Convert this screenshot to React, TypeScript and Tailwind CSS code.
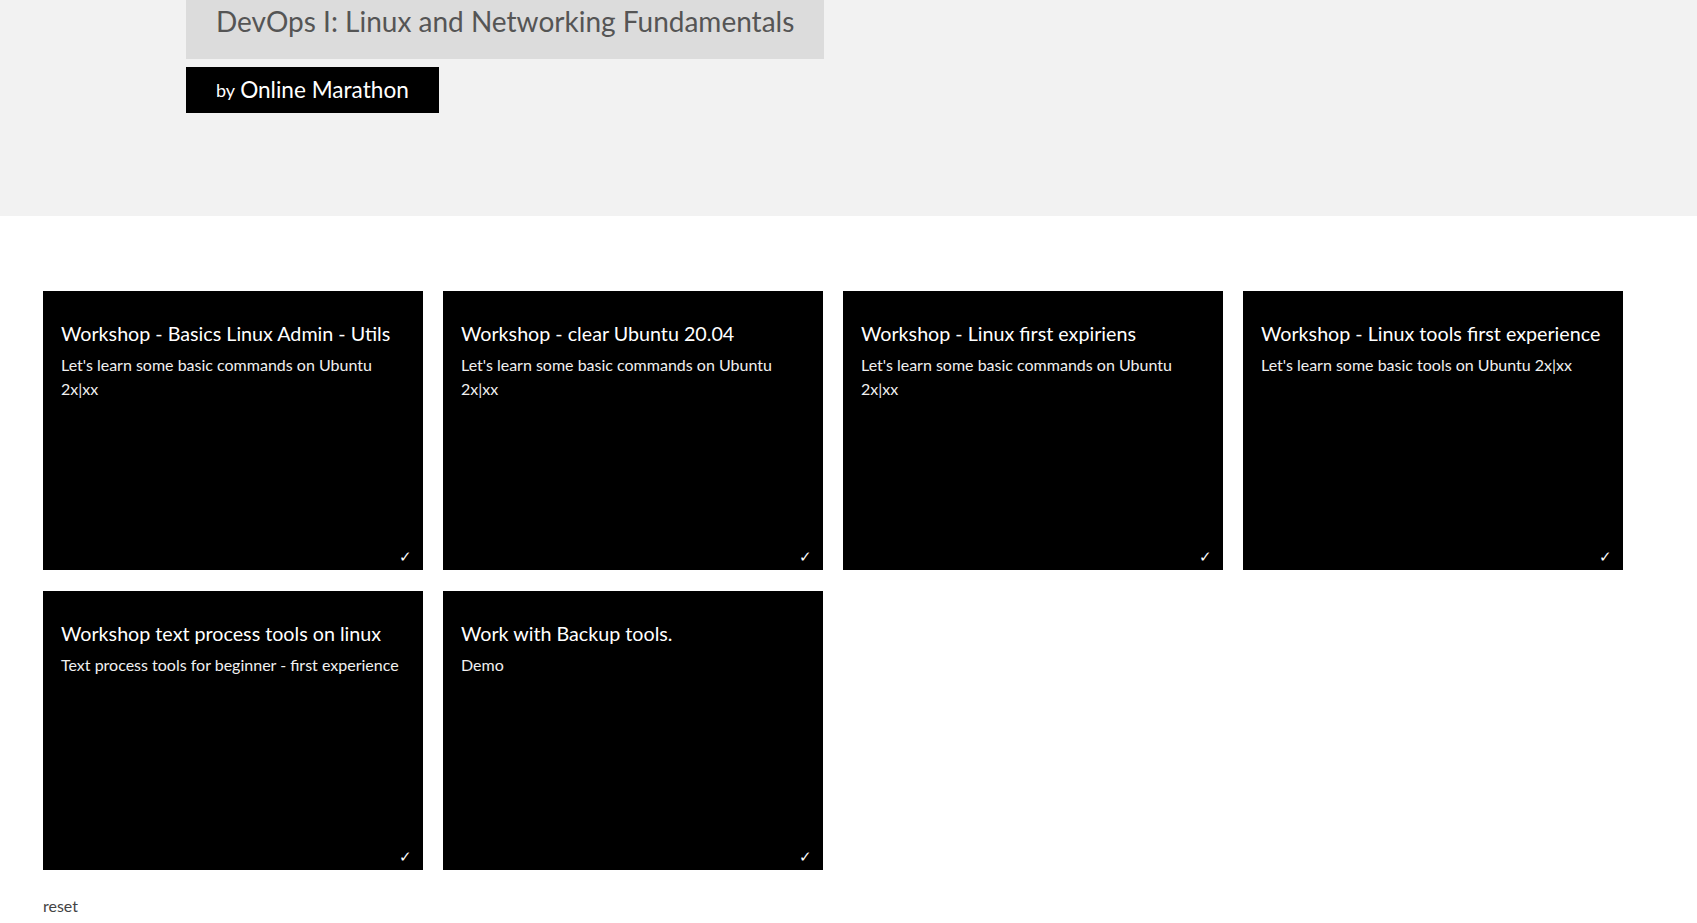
const cards = [
  { title: 'Workshop - Basics Linux Admin - Utils', text: "Let's learn some basic commands on Ubuntu 2x|xx" },
  { title: 'Workshop - clear Ubuntu 20.04', text: "Let's learn some basic commands on Ubuntu 2x|xx" },
  { title: 'Workshop - Linux first expiriens', text: "Let's learn some basic commands on Ubuntu 2x|xx" },
  { title: 'Workshop - Linux tools first experience', text: "Let's learn some basic tools on Ubuntu 2x|xx" },
  { title: 'Workshop text process tools on linux', text: 'Text process tools for beginner - first experience' },
  { title: 'Work with Backup tools.', text: 'Demo' },
];

function Card({ title, text }: { title: string; text: string }) {
  return (
    <div className="relative h-[279px] bg-black pl-[18px] pr-[8px] pt-[29px] text-white">
      <h3 className="whitespace-nowrap text-[19.7px] leading-[28px] font-normal">{title}</h3>
      <p className="mt-[5px] w-[347px] text-[16px] leading-[24px] text-[#f0f0f0]">{text}</p>
      <span className="absolute bottom-[6px] right-[11px] text-[15px] leading-none">✓</span>
    </div>
  );
}

export default function App() {
  return (
    <div className="min-h-screen bg-white font-['Lato','Open_Sans',sans-serif]">
      {/* шапка курса */}
      <div className="h-[216px] bg-[#f2f2f2] pl-[186px]">
        <div className="h-[59px] w-[638px] bg-[#dcdcdc] pl-[30px] pt-[3px]">
          <h1 className="text-[28px] leading-[36px] text-[#555555]">DevOps I: Linux and Networking Fundamentals</h1>
        </div>
        <div className="mt-[8px] flex h-[46px] w-[253px] items-center bg-black pl-[30px] text-white">
          <span className="text-[18px]">by</span>
          <span className="ml-[5px] text-[22.6px]">Online Marathon</span>
        </div>
      </div>

      {/* карточки */}
      <div className="px-[43px] pt-[75px]">
        <div className="grid w-[1580px] grid-cols-4 gap-x-[20px] gap-y-[21px]">
          {cards.map((c) => (
            <Card key={c.title} title={c.title} text={c.text} />
          ))}
        </div>
        <button className="mt-[26px] text-[16px] leading-[20px] text-[#444444]">reset</button>
      </div>
    </div>
  );
}
